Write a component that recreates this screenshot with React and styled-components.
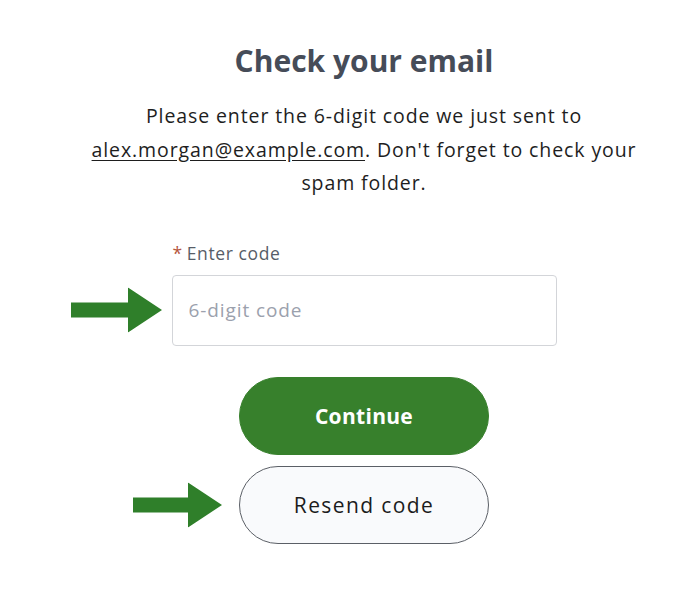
import React from 'react';
import styled, { createGlobalStyle } from 'styled-components';

const GlobalStyle = createGlobalStyle`
  html, body {
    margin: 0;
    padding: 0;
    background: #ffffff;
  }
  body {
    font-family: "Open Sans", "Liberation Sans", sans-serif;
  }
`;

const Page = styled.div`
  width: 689px;
  height: 599px;
  display: flex;
  justify-content: flex-start;
`;

const Column = styled.div`
  width: 564px;
  margin-left: 82px;
  display: flex;
  flex-direction: column;
  align-items: center;
  padding-top: 41px;
`;

const Title = styled.h1`
  margin: 0;
  font-size: 30px;
  line-height: 40px;
  font-weight: 700;
  color: #464c58;
`;

const Lead = styled.p`
  margin: 18px 0 0;
  font-size: 19.5px;
  line-height: 33.5px;
  letter-spacing: 0.9px;
  color: #1e1e1e;
  text-align: center;
`;

const Email = styled.a`
  color: inherit;
  text-decoration: underline;
  text-underline-offset: 3px;
`;

const Field = styled.div`
  margin-top: 42px;
  width: 385px;
  display: flex;
  flex-direction: column;
  gap: 11px;
`;

const Label = styled.label`
  font-size: 17.5px;
  line-height: 22px;
  letter-spacing: 0.6px;
  color: #575d68;
  padding-left: 1px;
`;

const Required = styled.span`
  color: #b5553e;
  margin-right: 4px;
`;

const InputWrap = styled.div`
  position: relative;
`;

const Input = styled.input`
  box-sizing: border-box;
  width: 100%;
  height: 71px;
  border: 1px solid #d3d5d9;
  border-radius: 4px;
  padding: 0 16px;
  font-family: inherit;
  font-size: 19px;
  letter-spacing: 0.9px;
  color: #1e1e1e;
  background: #ffffff;
  outline: none;
  &::placeholder {
    color: #9ba1ad;
  }
`;

const Actions = styled.div`
  margin-top: 31px;
  display: flex;
  flex-direction: column;
  gap: 11px;
`;

const ButtonWrap = styled.div`
  position: relative;
`;

const Button = styled.button`
  box-sizing: border-box;
  width: 250px;
  height: 78px;
  border-radius: 39px;
  font-family: inherit;
  font-size: 21px;
  cursor: pointer;
  border: 1px solid ${p => (p.$primary ? '#37802c' : '#5b5f66')};
  background: ${p => (p.$primary ? '#37802c' : '#f9fafc')};
  color: ${p => (p.$primary ? '#ffffff' : '#1c1c1c')};
  font-weight: ${p => (p.$primary ? 700 : 400)};
  letter-spacing: ${p => (p.$primary ? '0.3px' : '1.4px')};
`;

const Pointer = styled.svg`
  position: absolute;
  top: 50%;
  transform: translateY(-50%);
  right: calc(100% + ${p => p.$gap}px);
`;

const Arrow = ({ gap, length = 91 }) => (
  <Pointer $gap={gap} width={length} height="45" viewBox={`0 0 ${length} 45`}>
    <polygon
      points={`0,15 ${length - 34},15 ${length - 34},0 ${length},22.5 ${length - 34},45 ${length - 34},30 0,30`}
      fill="#2f7f2a"
    />
  </Pointer>
);

export default function App() {
  return (
    <>
      <GlobalStyle />
      <Page>
        <Column>
          <Title>Check your email</Title>
          <Lead>
            Please enter the 6-digit code we just sent to{' '}
            <Email href="#">alex.morgan@example.com</Email>. Don't forget to
            check your spam folder.
          </Lead>
          <Field>
            <Label htmlFor="code">
              <Required>*</Required>Enter code
            </Label>
            <InputWrap>
              <Arrow gap={10} length={91} />
              <Input id="code" placeholder="6-digit code" />
            </InputWrap>
          </Field>
          <Actions>
            <Button $primary>Continue</Button>
            <ButtonWrap>
              <Arrow gap={17} length={89} />
              <Button>Resend code</Button>
            </ButtonWrap>
          </Actions>
        </Column>
      </Page>
    </>
  );
}
